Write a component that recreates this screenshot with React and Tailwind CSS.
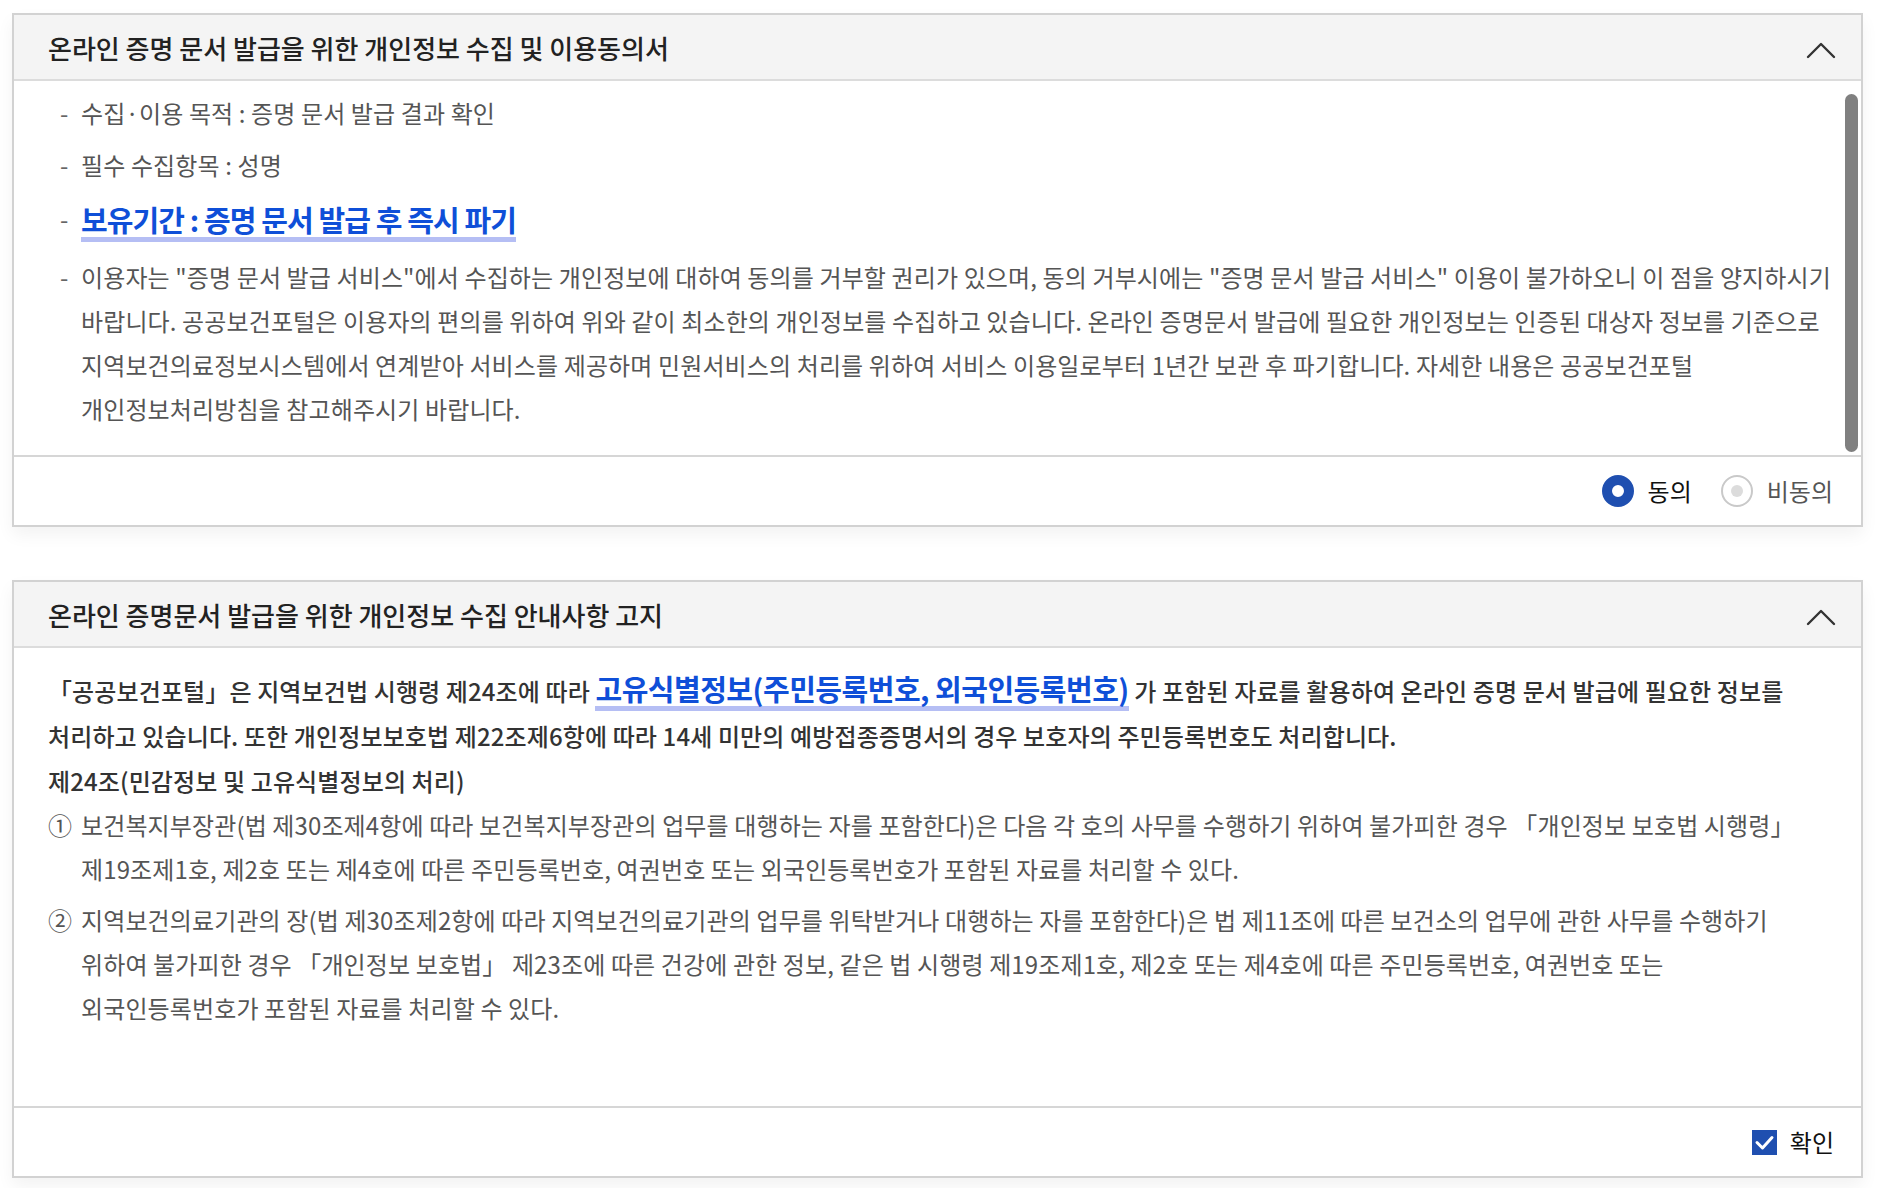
import React from "react";

function Chevron() {
  return (
    <svg width="30" height="18" viewBox="0 0 30 18" className="mt-[6px]">
      <polyline points="2,16 15,3 28,16" fill="none" stroke="#333" strokeWidth="2.4" strokeLinecap="round" strokeLinejoin="round" />
    </svg>
  );
}

function Header({ title }) {
  return (
    <div className="h-[66px] flex items-center justify-between pl-[34px] pr-[25px] bg-[#f4f4f4] border-b-2 border-[#dcdcdc]">
      <h2 className="text-[26px] font-medium text-[#222]">{title}</h2>
      <Chevron />
    </div>
  );
}

export default function App() {
  return (
    <div className="min-h-screen bg-white font-['Noto_Sans_CJK_KR',sans-serif] pt-[13px] pl-[12px]">
      <div className="w-[1851px] flex flex-col gap-[53px]">
        {/* Panel 1 */}
        <section className="border-2 border-[#d2d2d2] bg-white shadow-[0_8px_16px_rgba(0,0,0,0.05)]">
          <Header title="온라인 증명 문서 발급을 위한 개인정보 수집 및 이용동의서" />
          <div className="relative h-[374px] pl-[46px] pt-[10px] text-[24px] tracking-[0.12px] text-[#555]">
            <div className="flex leading-[44px]">
              <span className="w-[21px] shrink-0 text-[#666]">-</span>
              <span>수집·이용 목적 : 증명 문서 발급 결과 확인</span>
            </div>
            <div className="flex leading-[44px] mt-[8px]">
              <span className="w-[21px] shrink-0 text-[#666]">-</span>
              <span>필수 수집항목 : 성명</span>
            </div>
            <div className="flex mt-[14px]">
              <span className="w-[21px] shrink-0 text-[#666] leading-[36px]">-</span>
              <span className="inline-block leading-[36px] text-[29px] font-bold tracking-[-0.9px] text-[#0f4fd8] border-b-[5px] border-[#b5bef4]">
                보유기간 : 증명 문서 발급 후 즉시 파기
              </span>
            </div>
            <div className="flex leading-[44px] mt-[13px]">
              <span className="w-[21px] shrink-0 text-[#666]">-</span>
              <div>
                <span className="block whitespace-nowrap">이용자는 "증명 문서 발급 서비스"에서 수집하는 개인정보에 대하여 동의를 거부할 권리가 있으며, 동의 거부시에는 "증명 문서 발급 서비스" 이용이 불가하오니 이 점을 양지하시기</span>
                <span className="block whitespace-nowrap">바랍니다. 공공보건포털은 이용자의 편의를 위하여 위와 같이 최소한의 개인정보를 수집하고 있습니다. 온라인 증명문서 발급에 필요한 개인정보는 인증된 대상자 정보를 기준으로</span>
                <span className="block whitespace-nowrap">지역보건의료정보시스템에서 연계받아 서비스를 제공하며 민원서비스의 처리를 위하여 서비스 이용일로부터 1년간 보관 후 파기합니다. 자세한 내용은 공공보건포털</span>
                <span className="block whitespace-nowrap">개인정보처리방침을 참고해주시기 바랍니다.</span>
              </div>
            </div>
            <div className="absolute right-[3px] top-[13px] bottom-[3px] w-[13px] rounded-full bg-[#808080]" />
          </div>
          <div className="h-[70px] border-t-2 border-[#d6d6d6] flex items-center justify-end pr-[28px] text-[24px]">
            <div className="w-[32px] h-[32px] rounded-full border-[10px] border-[#1f4fb0] bg-white" />
            <span className="ml-[14px] text-[#111]">동의</span>
            <div className="ml-[29px] w-[32px] h-[32px] rounded-full border-2 border-[#c9c9c9] flex items-center justify-center">
              <div className="w-[12px] h-[12px] rounded-full bg-[#dcdcdc]" />
            </div>
            <span className="ml-[14px] text-[#555]">비동의</span>
          </div>
        </section>

        {/* Panel 2 */}
        <section className="border-2 border-[#d2d2d2] bg-white shadow-[0_8px_16px_rgba(0,0,0,0.05)]">
          <Header title="온라인 증명문서 발급을 위한 개인정보 수집 안내사항 고지" />
          <div className="h-[458px] pl-[34px] pt-[20px] text-[24px] tracking-[0.12px] text-[#555]">
            <p className="leading-[45px] text-[#333] font-medium">
              <span className="block whitespace-nowrap">
                「공공보건포털」은 지역보건법 시행령 제24조에 따라{" "}
                <span className="inline-block leading-[36px] text-[29px] font-bold tracking-[-0.5px] text-[#0f4fd8] border-b-[5px] border-[#b5bef4]">
                  고유식별정보(주민등록번호, 외국인등록번호)
                </span>{" "}
                가 포함된 자료를 활용하여 온라인 증명 문서 발급에 필요한 정보를
              </span>
              <span className="block whitespace-nowrap">처리하고 있습니다. 또한 개인정보보호법 제22조제6항에 따라 14세 미만의 예방접종증명서의 경우 보호자의 주민등록번호도 처리합니다.</span>
            </p>
            <p className="leading-[45px] text-[#333] font-medium">제24조(민감정보 및 고유식별정보의 처리)</p>
            <div className="flex leading-[44px]">
              <span className="w-[33px] shrink-0 text-[#555]">①</span>
              <div>
                <span className="block whitespace-nowrap">보건복지부장관(법 제30조제4항에 따라 보건복지부장관의 업무를 대행하는 자를 포함한다)은 다음 각 호의 사무를 수행하기 위하여 불가피한 경우 「개인정보 보호법 시행령」</span>
                <span className="block whitespace-nowrap">제19조제1호, 제2호 또는 제4호에 따른 주민등록번호, 여권번호 또는 외국인등록번호가 포함된 자료를 처리할 수 있다.</span>
              </div>
            </div>
            <div className="flex leading-[44px] mt-[7px]">
              <span className="w-[33px] shrink-0 text-[#555]">②</span>
              <div>
                <span className="block whitespace-nowrap">지역보건의료기관의 장(법 제30조제2항에 따라 지역보건의료기관의 업무를 위탁받거나 대행하는 자를 포함한다)은 법 제11조에 따른 보건소의 업무에 관한 사무를 수행하기</span>
                <span className="block whitespace-nowrap">위하여 불가피한 경우 「개인정보 보호법」 제23조에 따른 건강에 관한 정보, 같은 법 시행령 제19조제1호, 제2호 또는 제4호에 따른 주민등록번호, 여권번호 또는</span>
                <span className="block whitespace-nowrap">외국인등록번호가 포함된 자료를 처리할 수 있다.</span>
              </div>
            </div>
          </div>
          <div className="h-[70px] border-t-2 border-[#d6d6d6] flex items-center justify-end pr-[27px] text-[24px]">
            <div className="w-[25px] h-[25px] bg-[#1f4fb0] flex items-center justify-center">
              <svg width="25" height="25" viewBox="0 0 25 25">
                <polyline points="5,12.5 10.5,18 20,7.5" fill="none" stroke="#fff" strokeWidth="3" strokeLinecap="round" strokeLinejoin="round" />
              </svg>
            </div>
            <span className="ml-[13px] text-[#111]">확인</span>
          </div>
        </section>
      </div>
    </div>
  );
}
